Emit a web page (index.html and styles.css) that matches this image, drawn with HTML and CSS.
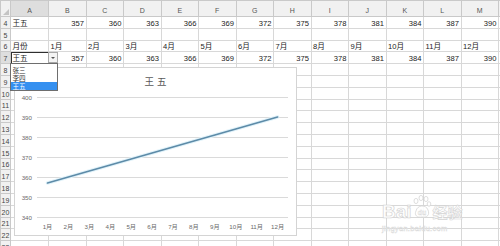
FILE: index.html
```html
<!DOCTYPE html>
<html lang="zh">
<head>
<meta charset="utf-8">
<title>Sheet</title>
<link rel="stylesheet" href="styles.css">
</head>
<body>
<div class="sheet">
<table class="grid">
<colgroup><col class="c-rh"><col class="c-a"><col class="c"><col class="c"><col class="c"><col class="c"><col class="c"><col class="c"><col class="c"><col class="c"><col class="c"><col class="c"><col class="c"><col class="c"><col class="c-n"></colgroup>
<tr class="hdr"><th class="corner"></th><th class="sel">A</th><th>B</th><th>C</th><th>D</th><th>E</th><th>F</th><th>G</th><th>H</th><th>I</th><th>J</th><th>K</th><th>L</th><th>M</th><th></th></tr>
<tr><th>4</th><td>王五</td><td class="n">357</td><td class="n">360</td><td class="n">363</td><td class="n">366</td><td class="n">369</td><td class="n">372</td><td class="n">375</td><td class="n">378</td><td class="n">381</td><td class="n">384</td><td class="n">387</td><td class="n">390</td><td></td></tr>
<tr><th>5</th><td></td><td></td><td></td><td></td><td></td><td></td><td></td><td></td><td></td><td></td><td></td><td></td><td></td><td></td></tr>
<tr><th>6</th><td>月份</td><td>1月</td><td>2月</td><td>3月</td><td>4月</td><td>5月</td><td>6月</td><td>7月</td><td>8月</td><td>9月</td><td>10月</td><td>11月</td><td>12月</td><td></td></tr>
<tr><th class="sel">7</th><td class="active">王五</td><td class="n">357</td><td class="n">360</td><td class="n">363</td><td class="n">366</td><td class="n">369</td><td class="n">372</td><td class="n">375</td><td class="n">378</td><td class="n">381</td><td class="n">384</td><td class="n">387</td><td class="n">390</td><td></td></tr>
<tr><th>8</th><td></td><td></td><td></td><td></td><td></td><td></td><td></td><td></td><td></td><td></td><td></td><td></td><td></td><td></td></tr>
<tr><th>9</th><td></td><td></td><td></td><td></td><td></td><td></td><td></td><td></td><td></td><td></td><td></td><td></td><td></td><td></td></tr>
<tr><th>10</th><td></td><td></td><td></td><td></td><td></td><td></td><td></td><td></td><td></td><td></td><td></td><td></td><td></td><td></td></tr>
<tr><th>11</th><td></td><td></td><td></td><td></td><td></td><td></td><td></td><td></td><td></td><td></td><td></td><td></td><td></td><td></td></tr>
<tr><th>12</th><td></td><td></td><td></td><td></td><td></td><td></td><td></td><td></td><td></td><td></td><td></td><td></td><td></td><td></td></tr>
<tr><th>13</th><td></td><td></td><td></td><td></td><td></td><td></td><td></td><td></td><td></td><td></td><td></td><td></td><td></td><td></td></tr>
<tr><th>14</th><td></td><td></td><td></td><td></td><td></td><td></td><td></td><td></td><td></td><td></td><td></td><td></td><td></td><td></td></tr>
<tr><th>15</th><td></td><td></td><td></td><td></td><td></td><td></td><td></td><td></td><td></td><td></td><td></td><td></td><td></td><td></td></tr>
<tr><th>16</th><td></td><td></td><td></td><td></td><td></td><td></td><td></td><td></td><td></td><td></td><td></td><td></td><td></td><td></td></tr>
<tr><th>17</th><td></td><td></td><td></td><td></td><td></td><td></td><td></td><td></td><td></td><td></td><td></td><td></td><td></td><td></td></tr>
<tr><th>18</th><td></td><td></td><td></td><td></td><td></td><td></td><td></td><td></td><td></td><td></td><td></td><td></td><td></td><td></td></tr>
<tr><th>19</th><td></td><td></td><td></td><td></td><td></td><td></td><td></td><td></td><td></td><td></td><td></td><td></td><td></td><td></td></tr>
<tr><th>20</th><td></td><td></td><td></td><td></td><td></td><td></td><td></td><td></td><td></td><td></td><td></td><td></td><td></td><td></td></tr>
<tr><th>21</th><td></td><td></td><td></td><td></td><td></td><td></td><td></td><td></td><td></td><td></td><td></td><td></td><td></td><td></td></tr>
<tr><th>22</th><td></td><td></td><td></td><td></td><td></td><td></td><td></td><td></td><td></td><td></td><td></td><td></td><td></td><td></td></tr>
<tr><th>23</th><td></td><td></td><td></td><td></td><td></td><td></td><td></td><td></td><td></td><td></td><td></td><td></td><td></td><td></td></tr>
</table>

<div class="chart">
<svg class="chart-svg" width="283" height="169" viewBox="0 0 283 169">
<rect x="0.5" y="0.5" width="282" height="168" fill="#fff" stroke="#d4d4d4"/>
<text class="title" x="143" y="17.5" text-anchor="middle">王五</text>
<g stroke="#dadada" stroke-width="1">
<line x1="23" y1="30.5" x2="274" y2="30.5"/>
<line x1="23" y1="50.5" x2="274" y2="50.5"/>
<line x1="23" y1="70.5" x2="274" y2="70.5"/>
<line x1="23" y1="90.5" x2="274" y2="90.5"/>
<line x1="23" y1="110.5" x2="274" y2="110.5"/>
<line x1="23" y1="130.5" x2="274" y2="130.5"/>
<line x1="23" y1="150.5" x2="274" y2="150.5"/>
</g>
<g class="ylab" text-anchor="end">
<text x="18" y="32.5">400</text>
<text x="18" y="52.5">390</text>
<text x="18" y="72.5">380</text>
<text x="18" y="92.5">370</text>
<text x="18" y="112.5">360</text>
<text x="18" y="132.5">350</text>
<text x="18" y="152.5">340</text>
</g>
<g class="xlab" text-anchor="middle">
<text x="33.5" y="162">1月</text>
<text x="54.4" y="162">2月</text>
<text x="75.3" y="162">3月</text>
<text x="96.3" y="162">4月</text>
<text x="117.2" y="162">5月</text>
<text x="138.1" y="162">6月</text>
<text x="159" y="162">7月</text>
<text x="179.9" y="162">8月</text>
<text x="200.9" y="162">9月</text>
<text x="221.8" y="162">10月</text>
<text x="242.7" y="162">11月</text>
<text x="263.6" y="162">12月</text>
</g>
<polyline points="33.5,116 263.6,50" fill="none" stroke="#e2f3fa" stroke-width="3.6" stroke-linecap="round"/>
<polyline points="33.5,116 54.4,110 75.3,104 96.3,98 117.2,92 138.1,86 159,80 179.9,74 200.9,68 221.8,62 242.7,56 263.6,50" fill="none" stroke="#5d8ba8" stroke-width="1.7" stroke-linecap="round" stroke-linejoin="round"/>
</svg>
</div>

<div class="dd-btn"><span class="dd-arrow"></span></div>
<ul class="dd-list">
<li>张三</li>
<li>李四</li>
<li class="picked">王五</li>
</ul>

<div class="watermark">
<div class="wm-logo">
<span class="wm-bai">Bai</span>
<svg class="wm-paw" width="20" height="26" viewBox="0 0 20 26">
<g fill="#fff" stroke="#d2d2d2" stroke-width="0.8">
<ellipse cx="4" cy="6" rx="2" ry="2.6"/>
<ellipse cx="9" cy="3" rx="2" ry="2.6"/>
<ellipse cx="14" cy="4" rx="2" ry="2.6"/>
<ellipse cx="17" cy="9" rx="1.8" ry="2.3"/>
<path d="M4 16 C5 10 14 9 16 15 C18 20 15 23 10 22 C5 23 2 20 4 16 Z"/>
</g>
<text x="10" y="20" text-anchor="middle" class="wm-du">du</text>
</svg>
<span class="wm-cn">经验</span>
</div>
<div class="wm-url">jingyan.baidu.com</div>
</div>
</div>
</body>
</html>
```

FILE: styles.css
```css
html, body {
  margin: 0;
  padding: 0;
}

body {
  width: 500px;
  height: 246px;
  overflow: hidden;
  background: #fff;
  font-family: "Liberation Sans", "Noto Sans CJK SC", sans-serif;
}

.sheet {
  position: relative;
  width: 500px;
  height: 246px;
  overflow: hidden;
}

.grid {
  border-collapse: collapse;
  table-layout: fixed;
  width: 520px;
}

.c-rh { width: 10px; }
.c-a { width: 38px; }
.c { width: 37.5px; }
.c-n { width: 22px; }

.grid tr { height: 11.8px; }
.grid tr.hdr { height: 16px; }

.grid td {
  border: 1px solid #d8d8d8;
  padding: 0 1.5px;
  font-size: 7.6px;
  line-height: 9px;
  color: #222;
  vertical-align: bottom;
  white-space: nowrap;
  overflow: hidden;
}

.grid td.n { text-align: right; }

.grid td.active {
  outline: 1.5px solid #2f2f2f;
  outline-offset: -1px;
}

.grid th {
  background: #f1f1f1;
  border: 1px solid #c9c9c9;
  padding: 0;
  font-weight: normal;
  font-size: 7px;
  line-height: 9px;
  color: #444;
  text-align: center;
  vertical-align: bottom;
  white-space: nowrap;
  overflow: visible;
}

.grid tr.hdr th {
  color: #555;
  vertical-align: middle;
  padding-top: 4px;
}

.grid th.sel { background: #dedede; }

.grid th.corner { position: relative; }
.grid th.corner::after {
  content: "";
  position: absolute;
  right: 1px;
  bottom: 1px;
  border-left: 6px solid transparent;
  border-bottom: 6px solid #c4c4c4;
}

.chart {
  position: absolute;
  left: 14px;
  top: 67px;
  width: 283px;
  height: 169px;
}

.chart-svg { display: block; }

.chart-svg .title {
  font-family: "Noto Sans CJK SC", sans-serif;
  font-size: 9.5px;
  letter-spacing: 3px;
  fill: #595959;
}

.chart-svg .ylab text,
.chart-svg .xlab text {
  font-family: "Liberation Sans", "Noto Sans CJK SC", sans-serif;
  font-size: 6.2px;
  fill: #6a6a6a;
}

.dd-btn {
  position: absolute;
  left: 48px;
  top: 52px;
  width: 9.5px;
  height: 11px;
  box-sizing: border-box;
  background: #f4f4f4;
  border: 1px solid #a8a8a8;
  display: flex;
  align-items: center;
  justify-content: center;
}

.dd-arrow {
  width: 0;
  height: 0;
  border-left: 2px solid transparent;
  border-right: 2px solid transparent;
  border-top: 2.5px solid #555;
}

.dd-list {
  position: absolute;
  left: 10px;
  top: 63px;
  width: 48px;
  height: 28px;
  box-sizing: border-box;
  margin: 0;
  padding: 2px 0 0;
  list-style: none;
  background: #fff;
  border: 1px solid #6e6e6e;
  overflow: hidden;
}

.dd-list li {
  display: flex;
  align-items: center;
  height: 8.2px;
  overflow: hidden;
  font-family: "Noto Sans CJK SC", sans-serif;
  font-size: 6.6px;
  line-height: 1;
  padding-left: 1.5px;
  color: #333;
}

.dd-list li.picked {
  background: #3590f0;
  color: #fff;
}

.watermark {
  position: absolute;
  left: 382px;
  top: 190px;
  width: 92px;
  opacity: 0.9;
}

.wm-logo {
  display: flex;
  align-items: flex-end;
  height: 32px;
}

.wm-bai {
  font-family: "Liberation Sans", sans-serif;
  font-weight: bold;
  font-size: 19px;
  line-height: 20px;
  color: #fff;
  -webkit-text-stroke: 0.7px #d0d0d0;
}

.wm-paw { display: block; margin-bottom: 1px; }

.wm-du {
  font-family: "Liberation Sans", sans-serif;
  font-weight: bold;
  font-size: 7px;
  fill: #fff;
  stroke: #d2d2d2;
  stroke-width: 0.4;
}

.wm-cn {
  font-family: "Noto Sans CJK SC", sans-serif;
  font-weight: bold;
  font-size: 15px;
  line-height: 20px;
  color: #fff;
  -webkit-text-stroke: 0.6px #d0d0d0;
  margin-left: 1px;
}

.wm-url {
  font-family: "Liberation Sans", sans-serif;
  font-size: 7.5px;
  line-height: 9px;
  color: #fff;
  -webkit-text-stroke: 0.4px #d6d6d6;
  margin-top: 2px;
  letter-spacing: 0.3px;
}
```
